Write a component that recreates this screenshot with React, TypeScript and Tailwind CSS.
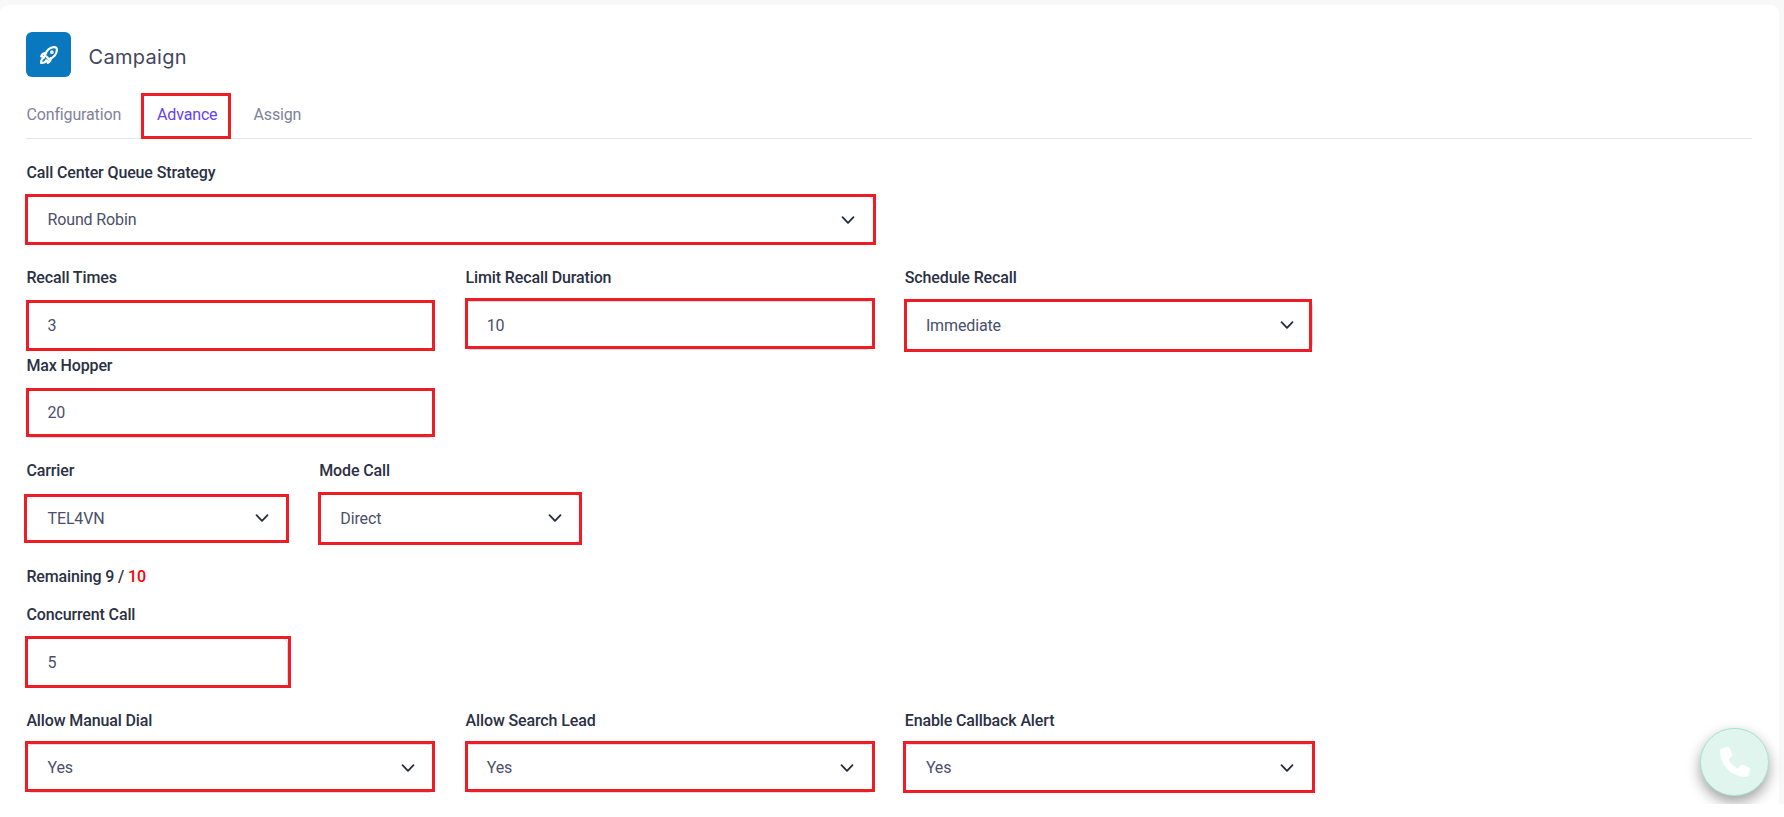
import { FaPhone } from "react-icons/fa6";

type FieldProps = {
  label: string;
  value: string;
  select?: boolean;
  raised?: boolean;
  width: string;
  mark: string;
};

function RocketIcon() {
  return (
    <svg className="h-5 w-5" viewBox="0 0 20 20" fill="none" stroke="currentColor" strokeWidth="2.2" strokeLinecap="round" strokeLinejoin="round">
      <path d="M5.8 10.2C7.2 6.2 10.6 2.4 15 2.1c2-.1 3 .9 2.9 2.9-.2 4-3.6 7.6-7.6 9.4Z" />
      <path d="M7.2 8.2C4.8 7.9 3 9.1 2.2 11.4L5 11.9" />
      <path d="M4.8 13c-2.2.5-2.7 2.4-2.7 5 2.6 0 4.600-.6 5.100-2.700" />
      <path d="M11.7 13.2c.2 2.3-.9 3.8-3 4.7L8.2 15.500" />
      <circle cx="12.9" cy="7.2" r="1.1" strokeWidth="1.5" />
    </svg>
  );
}

function Field({ label, value, select, raised, width, mark }: FieldProps) {
  return (
    <div className={`flex flex-col ${width}`}>
      <label className="mb-[11px] h-6 leading-6 font-medium tracking-[-0.13px] text-[#2b3044]">
        <span className="pl-[0.4px]">{label}</span>
      </label>
      <div className="relative flex h-[49px] items-center justify-between rounded-md border border-[#d8d8e2] pr-[18px] pl-[20.5px] tracking-[-0.13px] text-[#4a4f6d]">
        <span className={raised ? "pb-[2px]" : ""}>{value}</span>
        {select && (
          <svg className="mb-[2px] h-[14px] w-[14px]" viewBox="0 0 14 14" fill="none" stroke="#252b3b" strokeWidth="1.8" strokeLinecap="round" strokeLinejoin="round">
            <path d="M1.5 4.2 7 9.8 12.5 4.2" />
          </svg>
        )}
        <div className={`pointer-events-none absolute border-3 border-[#ee1c25] ${mark}`} />
      </div>
    </div>
  );
}

const quarter = "w-[408.2px]";
const sixth = "w-[262px]";

export default function App() {
  return (
    <div className="h-[817px] overflow-hidden bg-white font-['Roboto',sans-serif] text-base">
      <div className="h-[804px] overflow-hidden bg-[#f8f8f8] pt-[5px] pr-[5px]">
        <main className="relative h-[799px] rounded-t-lg bg-white px-[26px] pt-[27px]">
          <header className="flex h-[45px] items-center">
            <div className="flex h-[45px] w-[45px] items-center justify-center rounded-md bg-[#0a78bf] text-white">
              <RocketIcon />
            </div>
            <h1 className="mt-[5px] ml-[17.5px] font-['Inter',sans-serif] text-[20px] tracking-[0.3px] text-[#42465f]">Campaign</h1>
          </header>
          <nav className="mt-[16px] flex h-[46px] w-[1726px] items-stretch border-b border-[#e6e6e8] tracking-[-0.15px] text-[#7e829c]">
            <span className="w-[115px] pt-[10px] pl-[0.5px]">Configuration</span>
            <span className="-mb-px w-[90px] border-3 border-[#ee1c25] pt-[7px] pl-[13px] text-[#6440fb]">Advance</span>
            <span className="pt-[10px] pl-[22.5px]">Assign</span>
          </nav>
          <form className="mt-[22px]">
            <Field label="Call Center Queue Strategy" value="Round Robin" select raised width="w-[848px]" mark="-left-[2px] -right-[3px] -top-[3px] -bottom-px" />
            <div className="mt-[21px] flex gap-[31px]">
              <Field label="Recall Times" value="3" width={quarter} mark="-left-px -right-[2px] -top-[2px] -bottom-[2px]" />
              <Field label="Limit Recall Duration" value="10" width={quarter} mark="-left-px -right-[3px] -top-[4px] bottom-0" />
              <Field label="Schedule Recall" value="Immediate" select width={quarter} mark="-left-px -right-[0.5px] -top-[3px] -bottom-[3px]" />
            </div>
            <div className="mt-[4px] flex">
              <Field label="Max Hopper" value="20" raised width={quarter} mark="-left-px -right-[2px] -top-[2px] bottom-0" />
            </div>
            <div className="mt-[21px] flex gap-[30.8px]">
              <Field label="Carrier" value="TEL4VN" select width={sixth} mark="-left-[3px] -right-[2px] -top-px -bottom-px" />
              <Field label="Mode Call" value="Direct" select width={sixth} mark="-left-[2px] -right-[2px] -top-[3px] -bottom-[3px]" />
            </div>
            <p className="mt-[22px] h-6 pl-[0.4px] leading-6 font-medium tracking-[-0.13px] text-[#2b3044]">
              Remaining 9 / <span className="text-[#ff0000]">10</span>
            </p>
            <div className="mt-[14px] flex">
              <Field label="Concurrent Call" value="5" width={sixth} mark="-left-[2px] -right-[4px] -top-[3px] -bottom-[2px]" />
            </div>
            <div className="mt-[22px] flex gap-[31px]">
              <Field label="Allow Manual Dial" value="Yes" select raised width={quarter} mark="-left-[2px] -right-[2px] -top-[4px] bottom-0" />
              <Field label="Allow Search Lead" value="Yes" select raised width={quarter} mark="-left-px -right-[3px] -top-[4px] bottom-0" />
              <Field label="Enable Callback Alert" value="Yes" select raised width={quarter} mark="-left-[2px] -right-[3.5px] -top-[4px] -bottom-px" />
            </div>
          </form>
          <button className="absolute right-[10px] bottom-[8px] flex h-[68px] w-[69px] items-center justify-center rounded-full border border-[#a5e6cd] bg-[#e0f5ee] text-white shadow-[0_6px_14px_rgba(0,0,0,0.38)]">
            <FaPhone size={30} />
          </button>
        </main>
      </div>
    </div>
  );
}
